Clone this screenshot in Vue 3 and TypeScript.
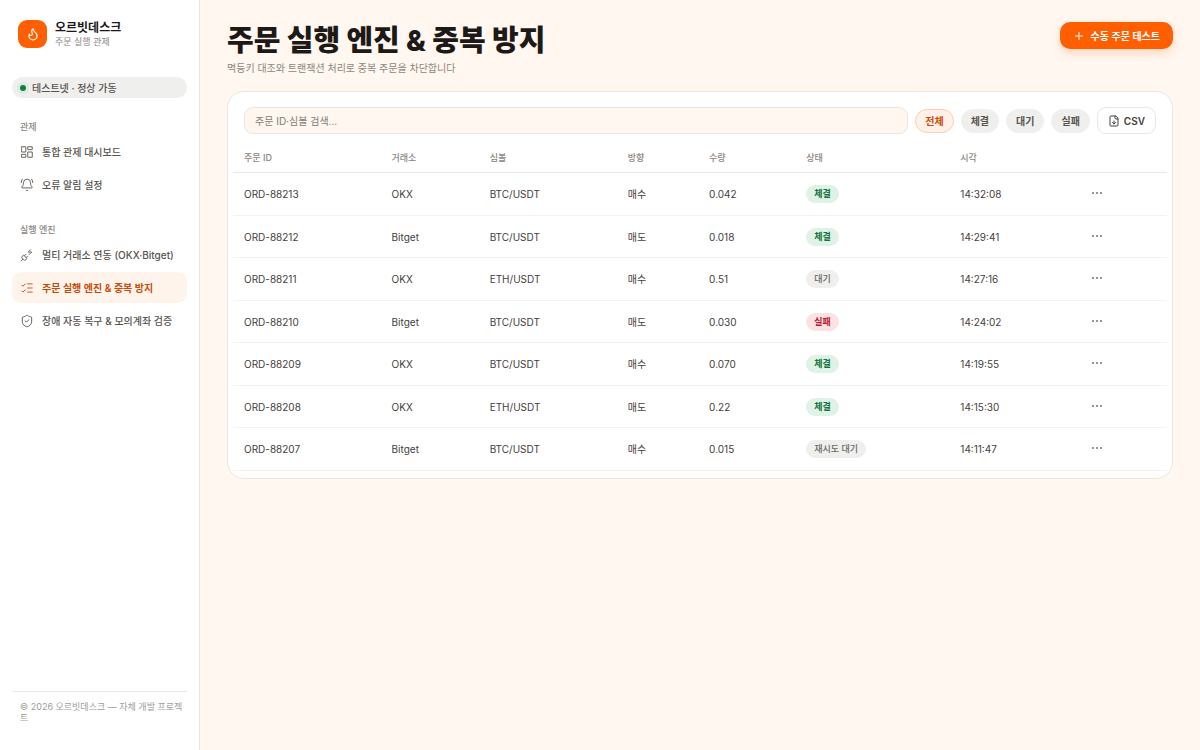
<script setup lang="ts">
import { computed, ref } from 'vue'

type Tone = 'ok' | 'idle' | 'bad'
interface Order {
  id: string
  exchange: string
  symbol: string
  side: string
  qty: string
  status: string
  tone: Tone
  time: string
}
interface NavItem {
  label: string
  icon: string[]
  active?: boolean
}
interface NavGroup {
  title: string
  items: NavItem[]
}

const groups: NavGroup[] = [
  {
    title: '관제',
    items: [
      { label: '통합 관제 대시보드', icon: ['M3 3h7v9H3z', 'M14 3h7v5h-7z', 'M14 12h7v9h-7z', 'M3 16h7v5H3z'] },
      {
        label: '오류 알림 설정',
        icon: [
          'M10.268 21a2 2 0 0 0 3.464 0',
          'M22 8c0-2.3-.8-4.3-2-6',
          'M3.262 15.326A1 1 0 0 0 4 17h16a1 1 0 0 0 .74-1.673C19.41 13.956 18 12.499 18 8A6 6 0 0 0 6 8c0 4.499-1.411 5.956-2.738 7.326',
          'M4 2C2.8 3.7 2 5.7 2 8',
        ],
      },
    ],
  },
  {
    title: '실행 엔진',
    items: [
      {
        label: '멀티 거래소 연동 (OKX·Bitget)',
        icon: [
          'M6.3 20.3a2.4 2.4 0 0 0 3.4 0L12 18l-6-6-2.3 2.3a2.4 2.4 0 0 0 0 3.4Z',
          'M2 22l3-3',
          'M7.5 13.5 10 11',
          'M10.5 16.5 13 14',
          'm18 3-4 4h6l-4 4',
        ],
      },
      {
        label: '주문 실행 엔진 & 중복 방지',
        icon: ['M13 5h8', 'M13 12h8', 'M13 19h8', 'm3 17 2 2 4-4', 'm3 7 2 2 4-4'],
        active: true,
      },
      {
        label: '장애 자동 복구 & 모의계좌 검증',
        icon: [
          'M20 13c0 5-3.5 7.5-7.66 8.95a1 1 0 0 1-.67-.01C7.5 20.5 4 18 4 13V6a1 1 0 0 1 1-1c2 0 4.5-1.2 6.24-2.72a1.17 1.17 0 0 1 1.52 0C14.51 3.81 17 5 19 5a1 1 0 0 1 1 1z',
          'm9 12 2 2 4-4',
        ],
      },
    ],
  },
]

const columns = ['주문 ID', '거래소', '심볼', '방향', '수량', '상태', '시각']
const orders: Order[] = [
  { id: 'ORD-88213', exchange: 'OKX', symbol: 'BTC/USDT', side: '매수', qty: '0.042', status: '체결', tone: 'ok', time: '14:32:08' },
  { id: 'ORD-88212', exchange: 'Bitget', symbol: 'BTC/USDT', side: '매도', qty: '0.018', status: '체결', tone: 'ok', time: '14:29:41' },
  { id: 'ORD-88211', exchange: 'OKX', symbol: 'ETH/USDT', side: '매수', qty: '0.51', status: '대기', tone: 'idle', time: '14:27:16' },
  { id: 'ORD-88210', exchange: 'Bitget', symbol: 'BTC/USDT', side: '매도', qty: '0.030', status: '실패', tone: 'bad', time: '14:24:02' },
  { id: 'ORD-88209', exchange: 'OKX', symbol: 'BTC/USDT', side: '매수', qty: '0.070', status: '체결', tone: 'ok', time: '14:19:55' },
  { id: 'ORD-88208', exchange: 'OKX', symbol: 'ETH/USDT', side: '매도', qty: '0.22', status: '체결', tone: 'ok', time: '14:15:30' },
  { id: 'ORD-88207', exchange: 'Bitget', symbol: 'BTC/USDT', side: '매수', qty: '0.015', status: '재시도 대기', tone: 'idle', time: '14:11:47' },
]

const filters = ['전체', '체결', '대기', '실패']
const filter = ref('전체')
const query = ref('')

const visible = computed(() =>
  orders.filter((o) => {
    const q = query.value.trim().toLowerCase()
    const hit = !q || o.id.toLowerCase().includes(q) || o.symbol.toLowerCase().includes(q)
    return hit && (filter.value === '전체' || o.status.includes(filter.value))
  }),
)
</script>

<template>
  <div class="app">
    <aside class="sidebar">
      <div class="brand">
        <span class="logo">
          <svg class="icon" viewBox="0 0 24 24" aria-hidden="true">
            <path d="M8.5 14.5A2.5 2.5 0 0 0 11 12c0-1.38-.5-2-1-3-1.072-2.143-.224-4.054 2-6 .5 2.5 2 4.9 4 6.5 2 1.6 3 3.5 3 5.5a7 7 0 1 1-14 0c0-1.153.433-2.294 1-3a2.5 2.5 0 0 0 2.5 2.5z" />
          </svg>
        </span>
        <div>
          <div class="brand-name">오르빗데스크</div>
          <div class="brand-sub">주문 실행 관제</div>
        </div>
      </div>

      <div class="env"><span class="dot"></span>테스트넷 · 정상 가동</div>

      <nav>
        <section v-for="g in groups" :key="g.title" class="group">
          <h2>{{ g.title }}</h2>
          <a v-for="n in g.items" :key="n.label" href="#" class="nav-item" :class="{ active: n.active }">
            <svg class="icon" viewBox="0 0 24 24" aria-hidden="true">
              <path v-for="d in n.icon" :key="d" :d="d" />
            </svg>
            <span>{{ n.label }}</span>
          </a>
        </section>
      </nav>

      <footer>© 2026 오르빗데스크 — 자체 개발 프로젝트</footer>
    </aside>

    <main>
      <header class="head">
        <div>
          <h1>주문 실행 엔진 &amp; 중복 방지</h1>
          <p>멱등키 대조와 트랜잭션 처리로 중복 주문을 차단합니다</p>
        </div>
        <button type="button" class="primary">
          <svg class="icon" viewBox="0 0 24 24" aria-hidden="true"><path d="M5 12h14M12 5v14" /></svg>
          수동 주문 테스트
        </button>
      </header>

      <section class="card">
        <div class="tools">
          <input v-model="query" type="text" aria-label="주문 검색" placeholder="주문 ID·심볼 검색..." />
          <button
            v-for="f in filters"
            :key="f"
            type="button"
            class="chip"
            :class="{ on: f === filter }"
            :aria-pressed="f === filter"
            @click="filter = f"
          >
            {{ f }}
          </button>
          <button type="button" class="csv">
            <svg class="icon" viewBox="0 0 24 24" aria-hidden="true">
              <path d="M15 2H6a2 2 0 0 0-2 2v16a2 2 0 0 0 2 2h12a2 2 0 0 0 2-2V7Z" />
              <path d="M14 2v4a2 2 0 0 0 2 2h4M12 18v-6M9 15l3 3 3-3" />
            </svg>
            CSV
          </button>
        </div>

        <table>
          <colgroup>
            <col class="c-id" /><col class="c-ex" /><col class="c-sym" /><col class="c-side" />
            <col class="c-qty" /><col class="c-status" /><col class="c-time" /><col />
          </colgroup>
          <thead>
            <tr>
              <th v-for="c in columns" :key="c" scope="col">{{ c }}</th>
              <td></td>
            </tr>
          </thead>
          <tbody>
            <tr v-for="o in visible" :key="o.id">
              <td>{{ o.id }}</td>
              <td>{{ o.exchange }}</td>
              <td>{{ o.symbol }}</td>
              <td>{{ o.side }}</td>
              <td>{{ o.qty }}</td>
              <td><span class="badge" :class="o.tone">{{ o.status }}</span></td>
              <td>{{ o.time }}</td>
              <td>
                <button type="button" class="more" :aria-label="o.id + ' 메뉴'">
                  <svg viewBox="0 0 10 4" aria-hidden="true">
                    <circle cx="1" cy="2" r="1" /><circle cx="5" cy="2" r="1" /><circle cx="9" cy="2" r="1" />
                  </svg>
                </button>
              </td>
            </tr>
          </tbody>
        </table>
      </section>
    </main>
  </div>
</template>

<style>
body {
  margin: 0;
  background: #fff7f0;
}
</style>

<style scoped>
.app {
  display: flex;
  min-height: 100vh;
  font-family: Inter, 'Noto Sans CJK KR', sans-serif;
  font-size: 10px;
  line-height: 16px;
  color: #44403c;
}
.app *,
.app {
  box-sizing: border-box;
}
button,
input {
  font: inherit;
  color: inherit;
}
button {
  display: inline-flex;
  align-items: center;
  justify-content: center;
  border: 0;
  cursor: pointer;
  white-space: nowrap;
}
.icon {
  width: 14px;
  height: 14px;
  flex: none;
  fill: none;
  stroke: currentColor;
  stroke-width: 2;
  stroke-linecap: round;
  stroke-linejoin: round;
}

.sidebar {
  display: flex;
  flex-direction: column;
  flex: none;
  width: 200px;
  padding: 20px 12px 27px;
  background: #fff;
  border-right: 1px solid #e9e7e5;
}
.brand {
  display: flex;
  align-items: center;
  gap: 8px;
  padding: 0 6px;
}
.logo {
  display: grid;
  place-items: center;
  width: 29px;
  height: 28px;
  border-radius: 9px;
  background: #ff5f00;
  color: #fff;
}
.brand-name {
  font-size: 12px;
  font-weight: 700;
  line-height: 15px;
  color: #1c1917;
}
.brand-sub {
  font-size: 9px;
  line-height: 13px;
  color: #8a8681;
}
.env {
  display: flex;
  align-items: center;
  gap: 6px;
  height: 21px;
  margin-top: 29px;
  padding: 0 8px;
  border-radius: 11px;
  background: #efefee;
  font-weight: 500;
  color: #57534e;
}
.dot {
  width: 6px;
  height: 6px;
  border-radius: 50%;
  background: #15803d;
  box-shadow: 0 0 0 3px #dfeae2;
}
.group {
  display: flex;
  flex-direction: column;
  gap: 2px;
  margin-top: 21px;
}
.group + .group {
  margin-top: 22px;
}
h2 {
  margin: 0;
  padding: 0 8px;
  font-size: 9px;
  font-weight: 500;
  line-height: 15px;
  color: #8a8681;
}
.nav-item {
  display: flex;
  align-items: center;
  gap: 8px;
  height: 31px;
  padding: 0 8px;
  border-radius: 9px;
  font-weight: 500;
  color: #57534e;
  text-decoration: none;
  white-space: nowrap;
}
.nav-item .icon {
  stroke-width: 1.7;
  opacity: 0.9;
}
.nav-item.active {
  background: #fff4ec;
  color: #c84a08;
  font-weight: 600;
}
footer {
  margin-top: auto;
  padding: 9px 0 0 8px;
  border-top: 1px solid #e9e7e5;
  font-size: 9px;
  line-height: 11px;
  color: #a09c98;
}

main {
  flex: 1;
  min-width: 0;
  padding: 22px 27px;
}
.head {
  display: flex;
  align-items: flex-start;
  justify-content: space-between;
  gap: 16px;
}
h1 {
  margin: 0;
  font-size: 29px;
  font-weight: 800;
  line-height: 38px;
  color: #1c1917;
}
.head p {
  margin: 0;
  line-height: 16px;
  color: #8a8681;
}
.primary {
  gap: 6px;
  height: 27px;
  padding: 0 13px;
  border-radius: 10px;
  background: #ff5f00;
  box-shadow: 0 4px 10px rgba(255, 95, 0, 0.22);
  color: #fff;
  font-weight: 600;
}
.primary .icon {
  width: 12px;
  height: 12px;
}

.card {
  margin-top: 15px;
  padding: 15px 5px 7px;
  border: 1px solid #ebe5e0;
  border-radius: 17px;
  background: #fff;
}
.tools {
  display: flex;
  align-items: center;
  gap: 7px;
  padding: 0 11px;
}
.tools input {
  flex: 1;
  min-width: 0;
  height: 27px;
  padding: 0 10px;
  border: 1px solid #ebe5e0;
  border-radius: 9px;
  background: #fff7f0;
}
.tools input::placeholder {
  color: #807c78;
  opacity: 1;
}
.chip {
  height: 24px;
  padding: 0 9px;
  border: 1px solid #efefee;
  border-radius: 12px;
  background: #efefee;
  font-weight: 600;
  color: #57534e;
}
.chip.on {
  border-color: #ffcdb0;
  background: #fff1e8;
  color: #c84a08;
}
.csv {
  gap: 4px;
  height: 27px;
  padding: 0 10px;
  border: 1px solid #e9e7e5;
  border-radius: 9px;
  background: #fff;
  font-weight: 600;
}
.csv .icon {
  width: 12px;
  height: 12px;
}

table {
  width: 100%;
  margin-top: 9px;
  border-collapse: separate;
  border-spacing: 0;
  table-layout: fixed;
}
.c-id { width: 15.8%; }
.c-ex { width: 10.5%; }
.c-sym { width: 14.8%; }
.c-side { width: 8.7%; }
.c-qty { width: 10.4%; }
.c-status { width: 16.5%; }
.c-time { width: 14.1%; }
th,
td {
  padding: 0 11px;
  text-align: left;
  white-space: nowrap;
}
thead tr {
  height: 30px;
}
th,
thead td {
  border-bottom: 1px solid #e9e7e5;
  font-size: 9px;
  font-weight: 500;
  color: #8a8681;
}
tbody tr {
  height: 42px;
}
tbody tr:nth-child(odd) {
  height: 43px;
}
tbody td {
  border-bottom: 1px solid #f3f2f1;
}
.badge {
  display: inline-block;
  padding: 1px 8px;
  border-radius: 9px;
  font-size: 9px;
  font-weight: 700;
  line-height: 16px;
  vertical-align: middle;
}
.badge.ok {
  background: #def2e6;
  color: #15713d;
}
.badge.idle {
  background: #efefee;
  color: #6b6762;
  font-weight: 500;
}
.badge.bad {
  background: #fbe3e4;
  color: #b91c2c;
}
.more {
  display: block;
  padding: 4px 0 6px;
  background: none;
  color: #78716c;
}
.more svg {
  display: block;
  width: 10px;
  height: 4px;
  fill: currentColor;
}
</style>
